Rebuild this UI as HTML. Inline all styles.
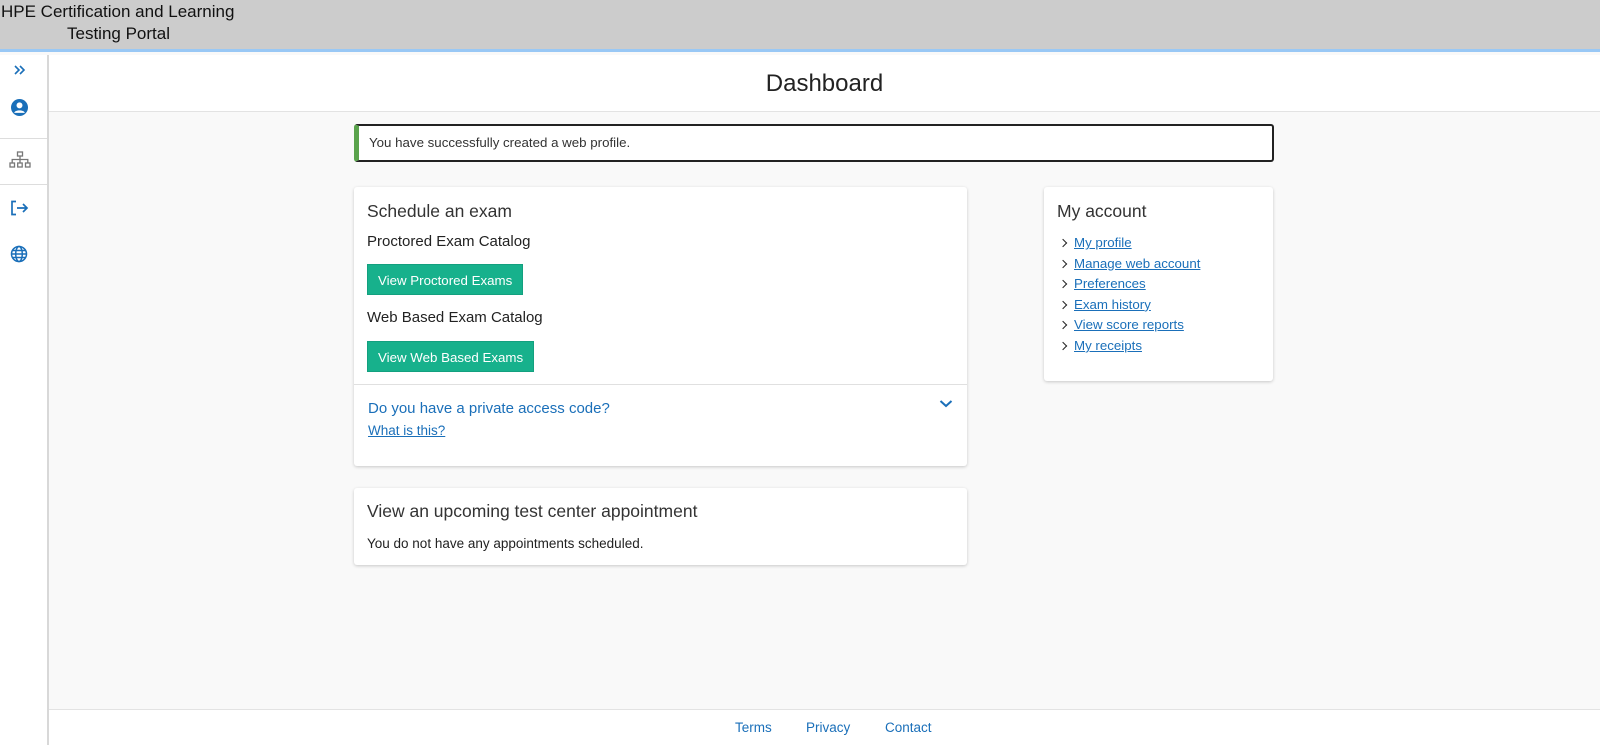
<!DOCTYPE html>
<html><head><meta charset="utf-8"><style>
*{box-sizing:border-box;margin:0;padding:0}
body{width:1600px;height:745px;overflow:hidden;background:#f9f9f9;font-family:"Liberation Sans",Arial,sans-serif;position:relative;color:#222}
.top{position:absolute;left:0;top:0;width:1600px;height:52px;background:#cccccc;border-bottom:3px solid #99c8f5}
.top .t1{position:absolute;left:1px;top:2px;font-size:17px;color:#111}
.top .t2{position:absolute;left:67px;top:24px;font-size:17px;color:#111}
.side{position:absolute;left:0;top:55px;width:49px;height:690px;background:#fff;border-right:2px solid #d8d8d8}
.side .sep{position:absolute;left:0;width:47px;height:1px;background:#ddd}
.ic{position:absolute;left:10px}
.hdr{position:absolute;left:49px;top:55px;width:1551px;height:57px;background:#fff;border-bottom:1px solid #e3e3e3;text-align:center;font-size:24px;line-height:57px;color:#222}
.alert{position:absolute;left:354px;top:124px;width:920px;height:38px;background:#fff;border:2px solid #222;border-left:5px solid #5aa34c;border-radius:3px;font-size:13.3px;padding-left:10px;line-height:34px;color:#333}
.card{position:absolute;background:#fff;border-radius:3px;box-shadow:0 1px 3px rgba(0,0,0,.2)}
.h{font-size:17.5px;color:#333;position:absolute}
.p{font-size:15px;color:#222;position:absolute}
.btn{position:absolute;background:#17b18c;color:#fff;font-size:13.3px;height:31px;line-height:31px;padding:0 10px;border:1px solid #13a07f}
a{color:#1a6fb9;text-decoration:underline}
.links{position:absolute;left:14px;top:46px;font-size:13.3px;line-height:20.6px}
.links div{padding-left:16px;position:relative}
.links div:before{content:"";position:absolute;left:2px;top:7px;width:5px;height:5px;border-right:1.6px solid #222;border-top:1.6px solid #222;transform:rotate(45deg)}
.foot{position:absolute;left:49px;top:709px;width:1551px;height:36px;background:#fff;border-top:1px solid #e3e3e3}
.foot a{position:absolute;top:10px;font-size:13.5px;text-decoration:none;color:#1a6fb9}
</style></head><body>
<div class="top"><div class="t1">HPE Certification and Learning</div><div class="t2">Testing Portal</div></div>
<div class="side">
<svg class="ic" style="top:9px;left:13px" width="14" height="12" viewBox="0 0 14 12"><path d="M2 2l4 4-4 4M7 2l4 4-4 4" fill="none" stroke="#1a6fb9" stroke-width="1.6"/></svg>
<svg class="ic" style="top:44px;left:11px" width="17" height="17" viewBox="0 0 16 16"><circle cx="8" cy="8" r="8" fill="#1a6fb9"/><circle cx="8" cy="6" r="2.8" fill="#fff"/><path d="M3 13c1-3 9-3 10 0" fill="#fff"/></svg>
<div class="sep" style="top:83px"></div>
<svg class="ic" style="top:96px;left:9px" width="22" height="18" viewBox="0 0 22 18"><g fill="none" stroke="#777" stroke-width="1.3"><rect x="8.5" y="1" width="5" height="4"/><rect x="1" y="12" width="4.5" height="4"/><rect x="8.7" y="12" width="4.5" height="4"/><rect x="16.5" y="12" width="4.5" height="4"/><path d="M11 5v7M3.2 12V8.5h15.6V12"/></g></svg>
<div class="sep" style="top:129px"></div>
<svg class="ic" style="top:145px;left:10px" width="19" height="16" viewBox="0 0 19 16"><g fill="none" stroke="#1a6fb9" stroke-width="1.7"><path d="M6 1.5H2v13h4M7 8h10M13 4l4 4-4 4"/></g></svg>
<svg class="ic" style="top:190px;left:10px" width="18" height="18" viewBox="0 0 18 18"><g fill="none" stroke="#1a6fb9" stroke-width="1.5"><circle cx="9" cy="9" r="7.5"/><ellipse cx="9" cy="9" rx="3.3" ry="7.5"/><path d="M1.5 9h15M2.5 5.5h13M2.5 12.5h13"/></g></svg>
</div>
<div class="hdr">Dashboard</div>
<div class="alert">You have successfully created a web profile.</div>
<div class="card" style="left:354px;top:187px;width:613px;height:279px">
<div class="h" style="left:13px;top:14px">Schedule an exam</div>
<div class="p" style="left:13px;top:46px">Proctored Exam Catalog</div>
<div class="btn" style="left:13px;top:77px">View Proctored Exams</div>
<div class="p" style="left:13px;top:122px">Web Based Exam Catalog</div>
<div class="btn" style="left:13px;top:154px">View Web Based Exams</div>
<div style="position:absolute;left:0;top:197px;width:613px;height:1px;background:#e0e0e0"></div>
<div class="p" style="left:14px;top:213px;color:#1a6fb9">Do you have a private access code?</div>
<svg style="position:absolute;left:585px;top:212px" width="14" height="10" viewBox="0 0 14 10"><path d="M1.5 2l5.5 5 5.5-5" fill="none" stroke="#1a6fb9" stroke-width="2"/></svg>
<a style="position:absolute;left:14px;top:236px;font-size:13.5px">What is this?</a>
</div>
<div class="card" style="left:354px;top:488px;width:613px;height:77px">
<div class="h" style="left:13px;top:13px">View an upcoming test center appointment</div>
<div class="p" style="left:13px;top:48px;font-size:13.5px">You do not have any appointments scheduled.</div>
</div>
<div class="card" style="left:1044px;top:187px;width:229px;height:194px">
<div class="h" style="left:13px;top:14px">My account</div>
<div class="links">
<div><a>My profile</a></div><div><a>Manage web account</a></div><div><a>Preferences</a></div><div><a>Exam history</a></div><div><a>View score reports</a></div><div><a>My receipts</a></div>
</div></div>
<div class="foot"><a style="left:686px">Terms</a><a style="left:757px">Privacy</a><a style="left:836px">Contact</a></div>
</body></html>
